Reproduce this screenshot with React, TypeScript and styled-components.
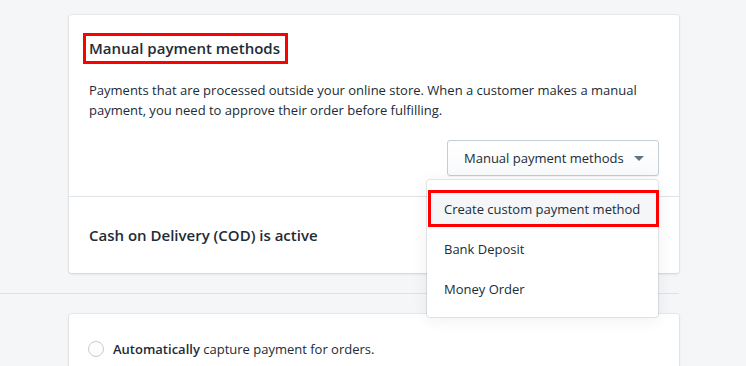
import React from "react";
import styled, { createGlobalStyle } from "styled-components";

const Global = createGlobalStyle`
  html, body { margin: 0; padding: 0; background: #f4f6f8; }
  body { font-family: "Open Sans", "Noto Sans", Arial, sans-serif; color: #212b36; overflow: hidden; }
  * { box-sizing: border-box; }
`;

const Page = styled.div`
  width: 679px;
`;

const Section = styled.section<{ $divider?: boolean }>`
  padding: ${(p) => (p.$divider ? "15px 0 20px 69px" : "20px 0 0 69px")};
  border-bottom: ${(p) => (p.$divider ? "1px solid #dfe3e8" : "none")};
`;

const Card = styled.div`
  position: relative;
  background: #fff;
  border-radius: 3px;
  box-shadow: 0 0 0 1px rgba(63, 63, 68, 0.05), 0 1px 3px 0 rgba(63, 63, 68, 0.15);
`;

const CardSection = styled.div<{ $top?: boolean }>`
  padding: ${(p) => (p.$top ? "18px 20px 20px" : "0 20px")};
  border-top: ${(p) => (p.$top ? "none" : "1px solid #dfe3e8")};
  height: ${(p) => (p.$top ? "181px" : "77px")};
  display: flex;
  flex-direction: column;
  justify-content: ${(p) => (p.$top ? "flex-start" : "center")};
`;

const Heading = styled.h2`
  align-self: flex-start;
  margin: 0 0 0 -6px;
  padding: 2px 5px 3px 3px;
  border: 3px solid #ff0000;
  font-size: 15px;
  font-weight: 600;
  line-height: 20px;
`;

const Text = styled.p`
  margin: 16px 0 0;
  font-size: 13px;
  line-height: 20px;
  color: #212b36;
`;

const ButtonRow = styled.div`
  display: flex;
  justify-content: flex-end;
  margin-top: 20px;
`;

const Button = styled.button`
  display: flex;
  align-items: center;
  gap: 10px;
  height: 36px;
  width: 212px;
  padding: 0 12px 0 16px;
  border: 1px solid #c4cdd5;
  border-radius: 3px;
  background: linear-gradient(180deg, #fff, #f9fafb);
  box-shadow: 0 1px 0 0 rgba(22, 29, 37, 0.05);
  font-family: inherit;
  font-size: 13px;
  color: #212b36;
`;

const Caret = styled.span`
  width: 0;
  height: 0;
  border-left: 5px solid transparent;
  border-right: 5px solid transparent;
  border-top: 5px solid #637381;
  margin-top: 1px;
`;

const Menu = styled.ul`
  position: absolute;
  left: 358px;
  top: 165px;
  width: 231px;
  margin: 0;
  padding: 10px 0 8px;
  list-style: none;
  background: #fff;
  border-radius: 3px;
  box-shadow: 0 0 0 1px rgba(6, 44, 82, 0.1), 0 2px 16px rgba(33, 43, 54, 0.08);
  z-index: 2;
`;

const Item = styled.li<{ $active?: boolean }>`
  height: ${(p) => (p.$active ? "37px" : "40px")};
  margin: ${(p) => (p.$active ? "0 -1px 2px 1px" : "0")};
  display: flex;
  align-items: center;
  padding-left: ${(p) => (p.$active ? "13px" : "17px")};
  font-size: 13px;
  color: #212b36;
  background: ${(p) => (p.$active ? "#f4f6f8" : "transparent")};
  border: ${(p) => (p.$active ? "3px solid #ff0000" : "none")};
`;

const Status = styled.h3`
  margin: 0;
  font-size: 15px;
  font-weight: 600;
  line-height: 20px;
`;

const RadioRow = styled.label`
  display: flex;
  align-items: center;
  gap: 9px;
  padding: 26px 19px 20px;
  font-size: 13px;
`;

const Radio = styled.span`
  width: 16px;
  height: 16px;
  border-radius: 50%;
  border: 1px solid #c4cdd5;
  background: linear-gradient(180deg, #fff, #f9fafb);
`;

const Strong = styled.strong`
  font-weight: 600;
`;

export default function App() {
  return (
    <Page>
      <Global />
      <Section $divider>
        <Card>
          <CardSection $top>
            <Heading>Manual payment methods</Heading>
            <Text>
              Payments that are processed outside your online store. When a customer makes a manual
              payment, you need to approve their order before fulfilling.
            </Text>
            <ButtonRow>
              <Button>
                Manual payment methods
                <Caret />
              </Button>
            </ButtonRow>
          </CardSection>
          <CardSection>
            <Status>Cash on Delivery (COD) is active</Status>
          </CardSection>
          <Menu>
            <Item $active>Create custom payment method</Item>
            <Item>Bank Deposit</Item>
            <Item>Money Order</Item>
          </Menu>
        </Card>
      </Section>
      <Section>
        <Card>
          <RadioRow>
            <Radio />
            <span>
              <Strong>Automatically</Strong> capture payment for orders.
            </span>
          </RadioRow>
        </Card>
      </Section>
    </Page>
  );
}
